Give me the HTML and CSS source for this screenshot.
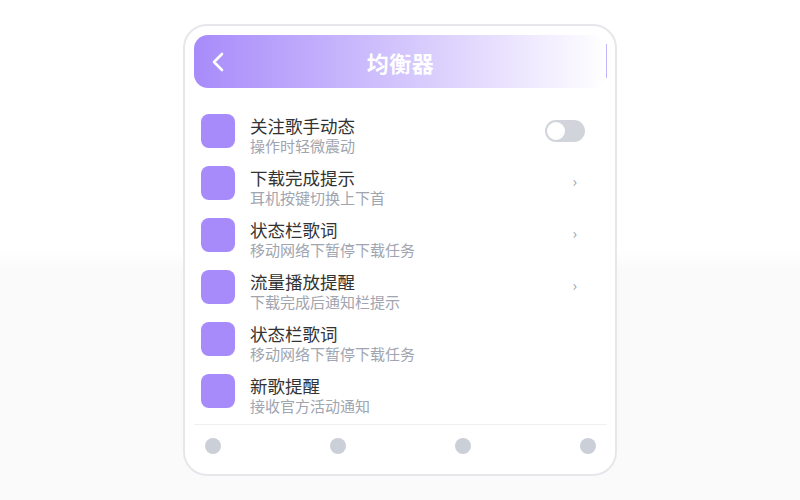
FILE: index.html
```html
<!DOCTYPE html>
<html lang="zh">
<head>
  <meta charset="UTF-8">
  <title>均衡器</title>
  <link rel="stylesheet" href="styles.css">
</head>
<body>
  <div class="card">
    <div class="header">
      <svg class="back" width="14" height="22" viewBox="0 0 14 22">
        <polyline points="11,3 3,11 11,19" fill="none" stroke="#fff" stroke-width="2.6" stroke-linecap="round" stroke-linejoin="round"/>
      </svg>
      <h1>均衡器</h1>
    </div>

    <ul class="list">
      <li class="row">
        <span class="icon"></span>
        <div class="text">
          <p class="title">关注歌手动态</p>
          <p class="sub">操作时轻微震动</p>
        </div>
        <span class="toggle"><span class="knob"></span></span>
      </li>
      <li class="row">
        <span class="icon"></span>
        <div class="text">
          <p class="title">下载完成提示</p>
          <p class="sub">耳机按键切换上下首</p>
        </div>
        <span class="arrow">›</span>
      </li>
      <li class="row">
        <span class="icon"></span>
        <div class="text">
          <p class="title">状态栏歌词</p>
          <p class="sub">移动网络下暂停下载任务</p>
        </div>
        <span class="arrow">›</span>
      </li>
      <li class="row">
        <span class="icon"></span>
        <div class="text">
          <p class="title">流量播放提醒</p>
          <p class="sub">下载完成后通知栏提示</p>
        </div>
        <span class="arrow">›</span>
      </li>
      <li class="row">
        <span class="icon"></span>
        <div class="text">
          <p class="title">状态栏歌词</p>
          <p class="sub">移动网络下暂停下载任务</p>
        </div>
      </li>
      <li class="row">
        <span class="icon"></span>
        <div class="text">
          <p class="title">新歌提醒</p>
          <p class="sub">接收官方活动通知</p>
        </div>
      </li>
    </ul>

    <div class="footer">
      <span class="dot"></span>
      <span class="dot"></span>
      <span class="dot"></span>
      <span class="dot"></span>
    </div>
  </div>
</body>
</html>
```

FILE: styles.css
```css
html, body {
  margin: 0;
  padding: 0;
  height: 100%;
}
body {
  font-family: "Noto Sans CJK SC", "Noto Sans", sans-serif;
  background: linear-gradient(to bottom, #ffffff 0, #ffffff 50%, #fafafb 54%, #fafafb 100%);
  display: flex;
  align-items: center;
  justify-content: center;
}
.card {
  box-sizing: border-box;
  width: 434px;
  height: 452px;
  border: 2px solid #e5e7eb;
  border-radius: 24px;
  background: #fff;
  padding: 9px 8px 9px 9px;
  display: flex;
  flex-direction: column;
}
.header {
  position: relative;
  height: 53px;
  border-radius: 14px;
  background: linear-gradient(to right, #a78bfa, #ffffff);
  display: flex;
  align-items: center;
  justify-content: center;
}
.header::after {
  content: "";
  position: absolute;
  right: 0;
  top: 9px;
  bottom: 10px;
  width: 1px;
  background: #c4b5fd;
}
.back {
  position: absolute;
  left: 17px;
  top: 16px;
}
.header h1 {
  margin: 0;
  font-size: 22px;
  font-weight: 700;
  color: #fff;
  letter-spacing: 0.5px;
}
.list {
  list-style: none;
  margin: 17px 0 0;
  padding: 0 22px 0 7px;
}
.row {
  height: 52px;
  display: flex;
  align-items: center;
}
.icon {
  width: 34px;
  height: 34px;
  border-radius: 8px;
  background: #a78bfa;
  flex-shrink: 0;
}
.text {
  flex: 1;
  margin-left: 15px;
  padding-top: 10px;
}
.text p {
  margin: 0;
}
.title {
  font-size: 17.5px;
  line-height: 20px;
  color: #333;
}
.sub {
  font-size: 15px;
  line-height: 20px;
  color: #a0a5b0;
}
.toggle {
  position: relative;
  width: 40px;
  height: 22px;
  border-radius: 11px;
  background: #d1d5db;
}
.knob {
  position: absolute;
  left: 2px;
  top: 2px;
  width: 18px;
  height: 18px;
  border-radius: 50%;
  background: #fff;
}
.arrow {
  color: #9ca3af;
  font-size: 15px;
  margin-right: 8px;
  margin-top: -6px;
}
.footer {
  margin-top: 7px;
  border-top: 1px solid #f0f0f2;
  padding: 13px 11px 0;
  display: flex;
  justify-content: space-between;
}
.dot {
  width: 16px;
  height: 16px;
  border-radius: 50%;
  background: #cbd0d8;
}
```
